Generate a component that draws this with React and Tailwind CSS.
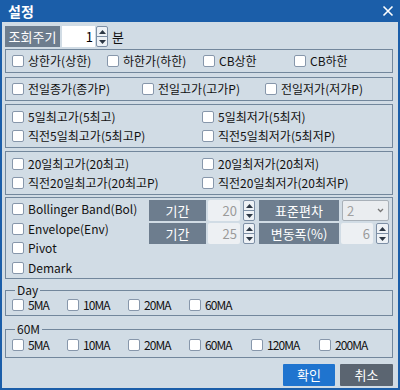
import React from 'react';

const font = { fontFamily: '"Noto Sans CJK KR", "Noto Sans", sans-serif' };

function Check({ label, className = '' }) {
  return (
    <label className={`flex items-center gap-[4px] shrink-0 ${className}`}>
      <span className="w-[12px] h-[12px] bg-white border border-[#8797ab] rounded-[2px] shrink-0" />
      <span className="text-[12px] leading-none text-[#111] whitespace-nowrap">{label}</span>
    </label>
  );
}

function MaCheck({ label, className = '' }) {
  return (
    <label className={`flex items-center gap-[4px] shrink-0 ${className}`}>
      <span className="w-[12px] h-[12px] bg-white border border-[#8797ab] rounded-[2px] shrink-0" />
      <span className="text-[12px] leading-none text-[#111] tracking-[-0.9px] whitespace-nowrap">{label}</span>
    </label>
  );
}

function Spinner({ className = '' }) {
  return (
    <div className={`flex flex-col h-[21px] border border-[#7d8fa5] rounded-[2px] bg-[#eef2f6] shrink-0 ${className}`}>
      <div className="flex-1 flex items-center justify-center border-b border-[#7d8fa5]">
        <svg width="7" height="4" viewBox="0 0 7 4"><path d="M3.5 0L7 4H0z" fill="#2c3744" /></svg>
      </div>
      <div className="flex-1 flex items-center justify-center">
        <svg width="7" height="4" viewBox="0 0 7 4"><path d="M0 0h7L3.5 4z" fill="#2c3744" /></svg>
      </div>
    </div>
  );
}

function Tag({ children, className = '' }) {
  return (
    <div className={`h-[21px] bg-[#6d7d8e] text-white text-[13px] flex items-center justify-center shrink-0 ${className}`}>
      {children}
    </div>
  );
}

function Box({ children, className = '' }) {
  return <div className={`w-[388px] border border-[#72879c] ${className}`}>{children}</div>;
}

export default function App() {
  return (
    <div className="w-[400px] h-[390px] bg-[#1b5ea9] flex flex-col px-[2px] pb-[2px]" style={font}>
      <div className="h-[22px] flex items-center justify-between pl-[6px] pr-[4px] shrink-0">
        <span className="text-white text-[14px] font-bold leading-none">설정</span>
        <svg width="12" height="12" viewBox="0 0 12 12">
          <path d="M1.5 1.5L10.5 10.5M10.5 1.5L1.5 10.5" stroke="#fff" strokeWidth="1.6" />
        </svg>
      </div>

      <div className="flex-1 bg-[#d1dce5] pl-[3px] pt-[4px] flex flex-col">
        <div className="flex items-center h-[21px]">
          <Tag className="w-[55px]">조회주기</Tag>
          <div className="ml-[2px] w-[33px] h-[21px] bg-white flex items-center justify-end pr-[2px] text-[13px]">1</div>
          <Spinner className="ml-[1px] w-[12px]" />
          <span className="ml-[4px] text-[13px] text-[#111]">분</span>
        </div>

        <Box className="mt-[2px] h-[24px] flex items-center pl-[6px]">
          <Check label="상한가(상한)" className="w-[95px]" />
          <Check label="하한가(하한)" className="w-[96px]" />
          <Check label="CB상한" className="w-[91px]" />
          <Check label="CB하한" />
        </Box>

        <Box className="mt-[4px] h-[24px] flex items-center pl-[6px]">
          <Check label="전일종가(종가P)" className="w-[130px]" />
          <Check label="전일고가(고가P)" className="w-[123px]" />
          <Check label="전일저가(저가P)" />
        </Box>

        <Box className="mt-[3px] h-[44px] grid grid-cols-[190px_1fr] grid-rows-2 items-center pl-[6px] py-[2px]">
          <Check label="5일최고가(5최고)" />
          <Check label="5일최저가(5최저)" />
          <Check label="직전5일최고가(5최고P)" />
          <Check label="직전5일최저가(5최저P)" />
        </Box>

        <Box className="mt-[3px] h-[44px] grid grid-cols-[190px_1fr] grid-rows-2 items-center pl-[6px] py-[2px]">
          <Check label="20일최고가(20최고)" />
          <Check label="20일최저가(20최저)" />
          <Check label="직전20일최고가(20최고P)" />
          <Check label="직전20일최저가(20최저P)" />
        </Box>

        <Box className="mt-[2px] h-[82px] flex pl-[6px]">
          <div className="w-[137px] flex flex-col pt-[1px]">
            <div className="h-[20px] flex items-center"><Check label="Bollinger Band(Bol)" /></div>
            <div className="h-[20px] flex items-center"><Check label="Envelope(Env)" /></div>
            <div className="h-[20px] flex items-center"><Check label="Pivot" /></div>
            <div className="h-[20px] flex items-center"><Check label="Demark" /></div>
          </div>
          <div className="flex flex-col gap-[2px] pt-[2px]">
            <div className="flex items-center">
              <Tag className="w-[57px]">기간</Tag>
              <div className="ml-[2px] w-[32px] h-[21px] bg-[#edf0f3] rounded-[2px] flex items-center justify-end pr-[3px] text-[13px] text-[#9a9a9a]">20</div>
              <Spinner className="ml-[3px] w-[12px]" />
              <Tag className="ml-[4px] w-[80px]">표준편차</Tag>
              <div className="ml-[3px] w-[47px] h-[21px] bg-[#eaedf0] border border-[#a8b0b8] rounded-[2px] flex items-center justify-between px-[4px] text-[13px] text-[#a0a0a0]">
                <span>2</span>
                <svg width="7" height="5" viewBox="0 0 7 5"><path d="M1 1l2.5 2.5L6 1" stroke="#777" strokeWidth="1.3" fill="none" /></svg>
              </div>
            </div>
            <div className="flex items-center">
              <Tag className="w-[57px]">기간</Tag>
              <div className="ml-[2px] w-[32px] h-[21px] bg-[#edf0f3] rounded-[2px] flex items-center justify-end pr-[3px] text-[13px] text-[#9a9a9a]">25</div>
              <Spinner className="ml-[3px] w-[12px]" />
              <Tag className="ml-[4px] w-[80px]">변동폭(%)</Tag>
              <div className="ml-[2px] w-[32px] h-[21px] bg-[#edf0f3] rounded-[2px] flex items-center justify-end pr-[3px] text-[13px] text-[#9a9a9a]">6</div>
              <Spinner className="ml-[3px] w-[13px]" />
            </div>
          </div>
        </Box>

        <div className="relative mt-[11px] w-[388px] h-[26px] border border-[#72879c] flex items-center pl-[6px] pt-[4px]">
          <span className="absolute -top-[8px] left-[9px] px-[2px] bg-[#d1dce5] text-[12px] leading-[14px] text-[#111]">Day</span>
          <MaCheck label="5MA" className="w-[55px]" />
          <MaCheck label="10MA" className="w-[61px]" />
          <MaCheck label="20MA" className="w-[61px]" />
          <MaCheck label="60MA" />
        </div>

        <div className="relative mt-[13px] w-[388px] h-[29px] border border-[#72879c] flex items-center pl-[6px] pt-[2px]">
          <span className="absolute -top-[8px] left-[9px] px-[2px] bg-[#d1dce5] text-[12px] leading-[14px] text-[#111]">60M</span>
          <MaCheck label="5MA" className="w-[55px]" />
          <MaCheck label="10MA" className="w-[61px]" />
          <MaCheck label="20MA" className="w-[61px]" />
          <MaCheck label="60MA" className="w-[62px]" />
          <MaCheck label="120MA" className="w-[68px]" />
          <MaCheck label="200MA" />
        </div>

        <div className="mt-[6px] w-[388px] flex justify-end gap-[5px]">
          <button className="w-[52px] h-[22px] bg-[#1f74cf] text-white text-[13px] rounded-[1px]">확인</button>
          <button className="w-[53px] h-[22px] bg-[#5b6571] text-white text-[13px] rounded-[1px]">취소</button>
        </div>
      </div>
    </div>
  );
}
